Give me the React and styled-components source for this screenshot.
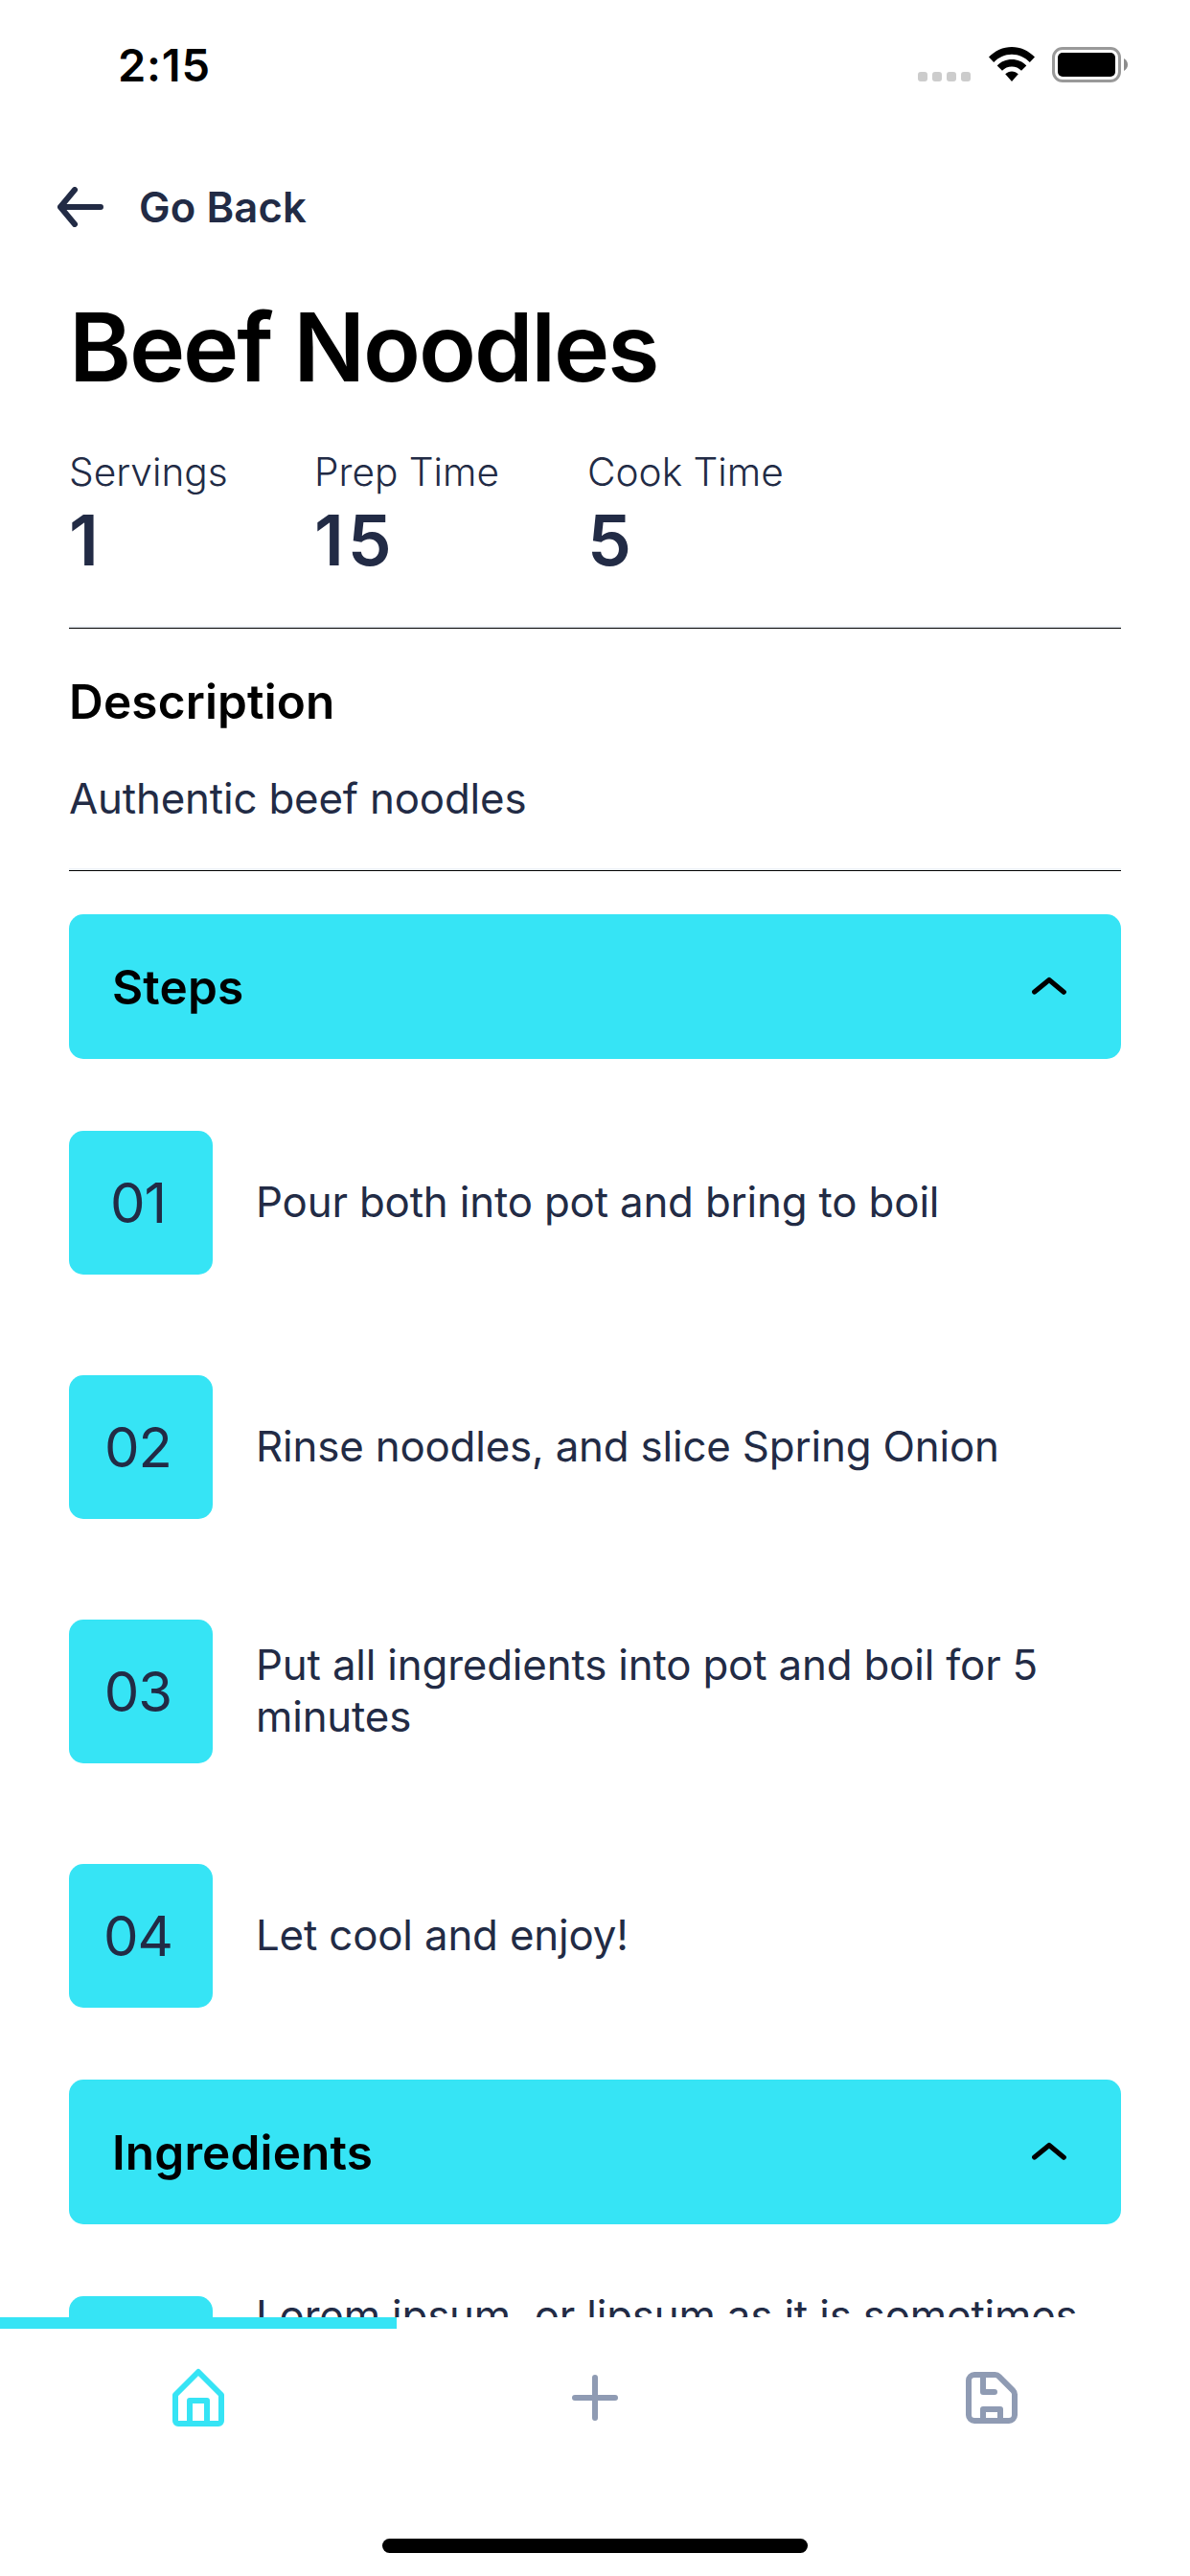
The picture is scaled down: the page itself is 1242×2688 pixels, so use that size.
import React from "react";
import styled, { createGlobalStyle } from "styled-components";

const cyan = "#36e4f5";
const navy = "#222b45";
const slate = "#8f9bb3";

const GlobalStyle = createGlobalStyle`
  * { box-sizing: border-box; }
  body { margin: 0; background: #fff; }
  h1, h2, p { margin: 0; }
  button { border: 0; padding: 0; background: none; font: inherit; color: inherit; }
`;

const Screen = styled.div`
  display: flex;
  flex-direction: column;
  width: 1242px;
  height: 2688px;
  overflow: hidden;
  background: #fff;
  color: ${navy};
  font-family: Inter, "Liberation Sans", sans-serif;
  font-kerning: normal;
`;

const StatusBar = styled.header`
  display: flex;
  flex: none;
  align-items: center;
  justify-content: space-between;
  height: 135px;
  padding: 0 65px 0 123px;
`;

const Clock = styled.time`
  color: #000;
  font-size: 47px;
  font-weight: 600;
  letter-spacing: 0.8px;
`;

const StatusIcons = styled.div`
  display: flex;
  align-items: flex-end;
  height: 37px;
`;

const Signal = styled.div`
  display: flex;
  gap: 5px;
  margin: 0 19px 1px 0;
`;

const SignalDot = styled.span`
  width: 10px;
  height: 10px;
  border-radius: 3px;
  background: #ccc;
`;

const WifiSlot = styled.span`
  display: flex;
  margin: 0 18px 0 0;
`;

const ScrollArea = styled.main`
  display: flex;
  flex: none;
  flex-direction: column;
  height: 2283px;
  padding: 0 72px;
  overflow: hidden;
`;

const BackButton = styled.button`
  display: flex;
  flex: none;
  align-items: center;
  gap: 37px;
  height: 162px;
  margin-left: -12px;
  font-size: 43.6px;
  font-weight: 600;
  letter-spacing: 0.1px;
`;

const Title = styled.h1`
  flex: none;
  color: #000;
  font-size: 98.6px;
  font-weight: 600;
  line-height: 130px;
  letter-spacing: -2.1px;
  white-space: nowrap;
`;

const Stats = styled.section`
  display: grid;
  flex: none;
  grid-template-columns: 256px 285px auto;
  margin: 41px 0 44px;
`;

const StatLabel = styled.p`
  font-size: 40.6px;
  font-weight: 300;
  line-height: 50px;
  white-space: nowrap;
`;

const StatValue = styled.p`
  font-size: 73px;
  font-weight: 600;
  line-height: 91px;
  letter-spacing: 4px;
`;

const Divider = styled.hr`
  flex: none;
  width: 100%;
  height: 3px;
  margin: 0;
  border: 0;
  border-bottom: 1px solid #000;
  background: #edf1f7;
`;

const Description = styled.section`
  display: flex;
  flex: none;
  flex-direction: column;
  gap: 44px;
  padding: 45px 0;
`;

const Heading = styled.h2`
  color: #000;
  font-size: 49.5px;
  font-weight: 600;
  line-height: 62px;
  letter-spacing: 0.15px;
`;

const Body = styled.p`
  font-size: 43.8px;
  line-height: 54px;
  letter-spacing: -0.16px;
`;

const Accordion = styled.section`
  display: flex;
  flex: none;
  flex-direction: column;
  gap: 75px;
  margin-top: ${(p) => p.$gap}px;
`;

const AccordionHeader = styled.button`
  display: flex;
  align-items: center;
  justify-content: space-between;
  height: 151px;
  padding: 0 45px;
  border-radius: 15px;
  background: ${cyan};
  color: #000;
  text-align: left;
`;

const StepList = styled.div`
  display: flex;
  flex-direction: column;
  gap: 105px;
`;

const StepRow = styled.div`
  display: flex;
  align-items: center;
  gap: 45px;
  height: 150px;
`;

const StepNumber = styled.div`
  display: flex;
  flex: none;
  align-items: center;
  justify-content: center;
  width: 150px;
  height: 150px;
  padding-right: 6px;
  border-radius: 15px;
  background: ${cyan};
  font-size: 58px;
  letter-spacing: -1px;
`;

const TabBar = styled.nav`
  flex: none;
  height: 270px;
  background: #fff;
`;

const TabTrack = styled.div`
  display: grid;
  grid-template-columns: repeat(3, 1fr);
  height: 12px;
`;

const TabIndicator = styled.div`
  background: ${cyan};
`;

const Tabs = styled.div`
  display: grid;
  grid-template-columns: repeat(3, 1fr);
  height: 144px;
`;

const Tab = styled.button`
  display: flex;
  align-items: center;
  justify-content: center;
  color: ${(p) => (p.$active ? cyan : slate)};
`;

const HomeIndicator = styled.div`
  width: 444px;
  height: 15px;
  margin: 75px auto 0;
  border-radius: 8px;
  background: #000;
`;

const LineIcon = ({ size = 72, width = 6, children }) => (
  <svg
    width={size}
    height={size}
    viewBox={`0 0 ${size} ${size}`}
    fill="none"
    stroke="currentColor"
    strokeWidth={width}
    strokeLinecap="round"
    strokeLinejoin="round"
  >
    {children}
  </svg>
);

const Wifi = () => (
  <svg width="48" height="37" viewBox="0 0 48 37">
    <path d="M0 10.6C6.300 4 15 0 24 0s17.700 4 24 10.600l-5.200 5.400C38 10.900 31.200 7.700 24 7.700S10 10.900 5.200 16Z" />
    <path d="M8.700 19.400C12.700 15.400 18 13 24 13s11.300 2.400 15.300 6.400L34 24.700c-2.600-2.600-6.100-4.200-10-4.200s-7.400 1.600-10 4.200Z" />
    <path d="M17.200 28.300c1.800-1.700 4.200-2.800 6.800-2.800s5 1.100 6.800 2.800L24 36Z" />
  </svg>
);

const Battery = () => (
  <svg width="79" height="37" viewBox="0 0 79 37">
    <rect x="1.500" y="1.500" width="69" height="34" rx="9.500" fill="none" stroke="#999" strokeWidth="3" />
    <rect x="6" y="6" width="60" height="25" rx="5" />
    <path d="M75 12c2.500 1.200 4 3.700 4 6.500s-1.500 5.300-4 6.500Z" fill="#8c8c8c" />
  </svg>
);

const BackArrow = () => (
  <svg width="48" height="42" viewBox="0 0 48 42" fill="none" stroke="currentColor" strokeWidth="6" strokeLinecap="round" strokeLinejoin="round">
    <path d="M45 21H3M18 3 3 21l15 18" />
  </svg>
);

const ChevronUp = () => (
  <LineIcon size={60} width={5.2}>
    <path d="M14.700 35 30 22.500 45.300 35.200" />
  </LineIcon>
);

const HomeIcon = () => (
  <LineIcon>
    <path d="M36 9 12 33v27c0 1.700 1.300 3 3 3h42c1.700 0 3-1.300 3-3V33Z" />
    <path d="M27 63V39h18v24" />
  </LineIcon>
);

const PlusIcon = () => (
  <LineIcon>
    <path d="M36 15v42M15 36h42" />
  </LineIcon>
);

const SaveIcon = () => (
  <LineIcon>
    <path d="M18 12h21.500c1.600 0 3.100.6 4.200 1.800l14.500 14.500c1.100 1.100 1.800 2.600 1.800 4.200V54c0 3.300-2.700 6-6 6H18c-3.300 0-6-2.700-6-6V18c0-3.300 2.700-6 6-6Z" />
    <path d="M27 12v18h12M27 60V48h18v12" />
  </LineIcon>
);

const stats = [
  { label: "Servings", value: 1 },
  { label: "Prep Time", value: 15 },
  { label: "Cook Time", value: 5 },
];

const steps = [
  "Pour both into pot and bring to boil",
  "Rinse noodles, and slice Spring Onion",
  "Put all ingredients into pot and boil for 5 minutes",
  "Let cool and enjoy!",
];

const ingredients = [
  "Lorem ipsum, or lipsum as it is sometimes known, is dummy text used in laying out print, graphic or web designs.",
];

const Section = ({ title, items, gap = 0 }) => (
  <Accordion $gap={gap}>
    <AccordionHeader>
      <Heading>{title}</Heading>
      <ChevronUp />
    </AccordionHeader>
    <StepList>
      {items.map((text, i) => (
        <StepRow key={text}>
          <StepNumber>{String(i + 1).padStart(2, "0")}</StepNumber>
          <Body>{text}</Body>
        </StepRow>
      ))}
    </StepList>
  </Accordion>
);

export default function App() {
  return (
    <>
      <GlobalStyle />
      <Screen>
        <StatusBar>
          <Clock>2:15</Clock>
          <StatusIcons>
            <Signal>
              {[0, 1, 2, 3].map((n) => (
                <SignalDot key={n} />
              ))}
            </Signal>
            <WifiSlot>
              <Wifi />
            </WifiSlot>
            <Battery />
          </StatusIcons>
        </StatusBar>
        <ScrollArea>
          <BackButton>
            <BackArrow />
            Go Back
          </BackButton>
          <Title>Beef Noodles</Title>
          <Stats>
            {stats.map((s) => (
              <div key={s.label}>
                <StatLabel>{s.label}</StatLabel>
                <StatValue>{s.value}</StatValue>
              </div>
            ))}
          </Stats>
          <Divider />
          <Description>
            <Heading>Description</Heading>
            <Body>Authentic beef noodles</Body>
          </Description>
          <Divider />
          <Section title="Steps" items={steps} gap={45} />
          <Section title="Ingredients" items={ingredients} gap={75} />
        </ScrollArea>
        <TabBar>
          <TabTrack>
            <TabIndicator />
          </TabTrack>
          <Tabs>
            <Tab $active>
              <HomeIcon />
            </Tab>
            <Tab>
              <PlusIcon />
            </Tab>
            <Tab>
              <SaveIcon />
            </Tab>
          </Tabs>
          <HomeIndicator />
        </TabBar>
      </Screen>
    </>
  );
}
